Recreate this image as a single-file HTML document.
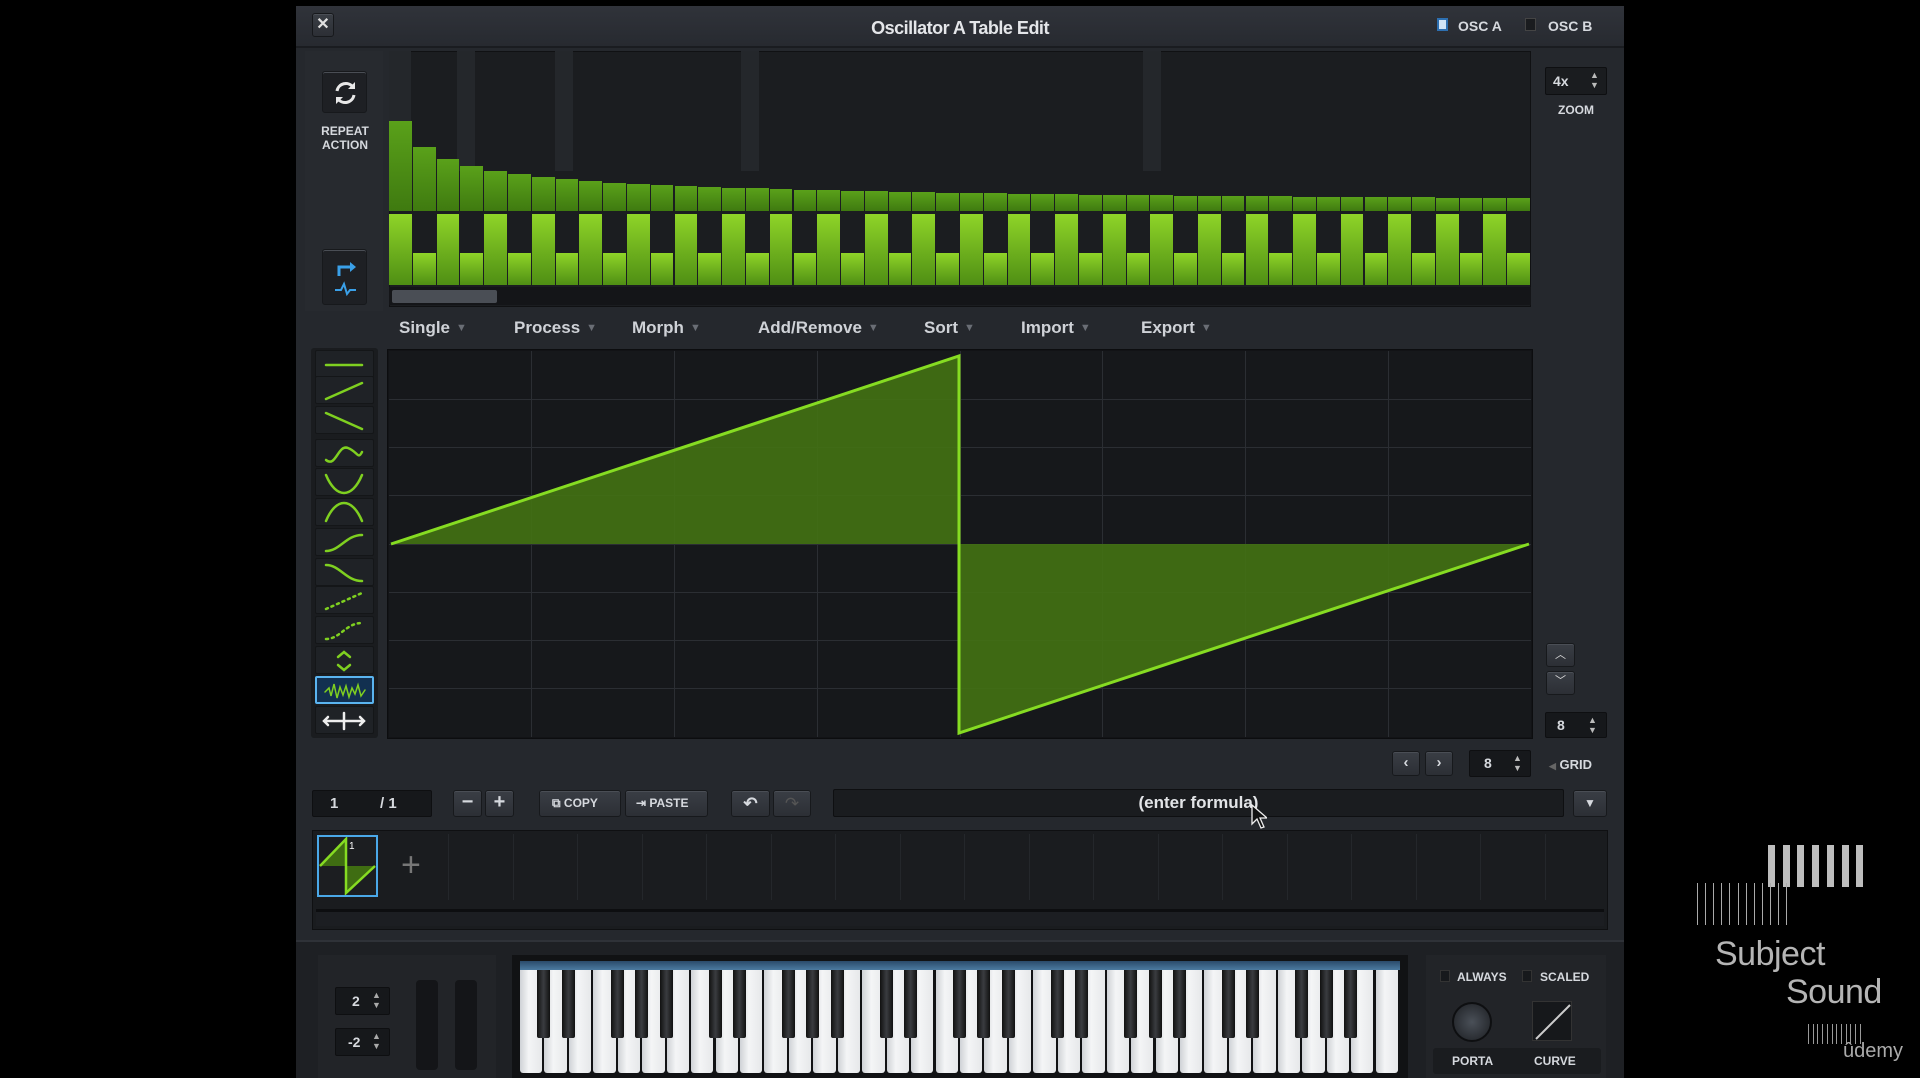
<!DOCTYPE html>
<html><head><meta charset="utf-8">
<style>
*{margin:0;padding:0;box-sizing:border-box}
body{width:1920px;height:1078px;background:#000;position:relative;overflow:hidden;font-family:"Liberation Sans",sans-serif;color:#d6d9de}
.a{position:absolute}
.btn{position:absolute;background:linear-gradient(#3a3e45,#2c2f35);border:1px solid #17191c;border-radius:3px;box-shadow:inset 0 1px 0 #4a4e55}
.fld{position:absolute;background:#16181b;border:1px solid #0e0f11;border-radius:2px}
.lbl{position:absolute;font-weight:bold;font-size:12px;color:#d6d9de;text-align:center}
.menu{position:absolute;top:318px;font-size:17px;font-weight:bold;color:#cfd2d7}
.menu i{font-style:normal;color:#6a6e75;font-size:11px;margin-left:6px;vertical-align:2px}
.tool{position:absolute;left:315px;width:59px;height:28px;background:#1f2226;border:1px solid #141618;border-radius:2px}
</style></head><body>
<div class="a" style="left:296px;top:6px;width:1328px;height:1072px;background:#25282d"></div>
<div class="a" style="left:296px;top:6px;width:1328px;height:42px;background:linear-gradient(#30333a,#272a30);border-bottom:2px solid #1a1c20"></div>
<div class="btn" style="left:312px;top:13px;width:22px;height:24px;font-weight:bold;font-size:16px;text-align:center;line-height:22px;color:#e0e0e0">✕</div>
<div class="a" style="left:760px;top:18px;width:400px;text-align:center;font-size:18px;font-weight:bold;color:#e4e6e9;letter-spacing:-0.5px">Oscillator A Table Edit</div>
<div class="a" style="left:1437px;top:18px;width:11px;height:13px;background:#cfe3f5;border:2px solid #2d6fb0"></div>
<div class="lbl" style="left:1458px;top:18px;font-size:14px">OSC A</div>
<div class="a" style="left:1525px;top:18px;width:11px;height:13px;background:#1a1c1f;border:1px solid #444"></div>
<div class="lbl" style="left:1548px;top:18px;font-size:14px">OSC B</div>

<div class="a" style="left:305px;top:51px;width:78px;height:260px;background:#272a2f"></div>
<div class="btn" style="left:322px;top:71px;width:45px;height:42px;background:#1e2024"><svg width="45" height="42"><path d="M14 19a9 9 0 0 1 16-4M31 23a9 9 0 0 1-16 4" stroke="#e8e8e8" stroke-width="3" fill="none"/><path d="M32 10v7h-7zM13 32v-7h7z" fill="#e8e8e8"/></svg></div>
<div class="lbl" style="left:310px;top:124px;width:70px;font-size:12px;line-height:14px">REPEAT<br>ACTION</div>
<div class="btn" style="left:322px;top:249px;width:45px;height:56px;background:#1e2024"><svg width="45" height="56"><path d="M16 26v-9h12" stroke="#3aa0e8" stroke-width="3" fill="none"/><path d="M27 12l6 5-6 5z" fill="#3aa0e8"/><path d="M12 40h6l3-6 3 10 3-4h6" stroke="#3aa0e8" stroke-width="2" fill="none"/></svg></div>

<div class="a" style="left:389px;top:51px;width:1142px;height:256px;background:#1b1d20;border:1px solid #101113"></div>
<div id="harm" class="a" style="left:389px;top:51px;width:1142px;height:236px"></div>
<div class="a" style="left:389px;top:287px;width:1142px;height:18px;background:#141518"></div>
<div class="a" style="left:392px;top:290px;width:105px;height:13px;background:#4a4e55;border-radius:2px"></div>

<div class="fld" style="left:1545px;top:67px;width:62px;height:28px;background:#1a1c1f"></div>
<div class="lbl" style="left:1553px;top:73px;font-size:14px">4x</div>
<div class="a" style="left:1590px;top:70px;font-size:9px;color:#bbb;line-height:10px">▲<br>▼</div>
<div class="lbl" style="left:1545px;top:103px;width:62px">ZOOM</div>

<div class="menu" style="left:399px">Single<i>▼</i></div>
<div class="menu" style="left:514px">Process<i>▼</i></div>
<div class="menu" style="left:632px">Morph<i>▼</i></div>
<div class="menu" style="left:758px">Add/Remove<i>▼</i></div>
<div class="menu" style="left:924px">Sort<i>▼</i></div>
<div class="menu" style="left:1021px">Import<i>▼</i></div>
<div class="menu" style="left:1141px">Export<i>▼</i></div>

<div class="a" style="left:311px;top:348px;width:67px;height:390px;background:#1a1c1f;border-radius:3px"></div>
<div id="tools"></div>

<div class="a" style="left:387px;top:349px;width:1146px;height:390px;background:#121316;border:1px solid #0c0d0f"></div>
<svg class="a" style="left:389px;top:351px" width="1142" height="386">
<rect width="1142" height="386" fill="#16181b"/>
<g stroke="#2b2e33" stroke-width="1">
<line x1="142.5" y1="0" x2="142.5" y2="386"/><line x1="285.5" y1="0" x2="285.5" y2="386"/><line x1="428.5" y1="0" x2="428.5" y2="386"/><line x1="571.5" y1="0" x2="571.5" y2="386"/><line x1="713.5" y1="0" x2="713.5" y2="386"/><line x1="856.5" y1="0" x2="856.5" y2="386"/><line x1="999.5" y1="0" x2="999.5" y2="386"/>
<line x1="0" y1="48.5" x2="1142" y2="48.5"/><line x1="0" y1="96.5" x2="1142" y2="96.5"/><line x1="0" y1="144.5" x2="1142" y2="144.5"/><line x1="0" y1="193.5" x2="1142" y2="193.5"/><line x1="0" y1="241.5" x2="1142" y2="241.5"/><line x1="0" y1="289.5" x2="1142" y2="289.5"/><line x1="0" y1="337.5" x2="1142" y2="337.5"/>
</g>
<path d="M2 193L570 5V193Z" fill="#42721300" />
<path d="M2 193L570 5V193Z" fill="#427213" opacity="0.9"/>
<path d="M570 193V382L1140 193Z" fill="#427213" opacity="0.9"/>
<path d="M2 193L570 5V382L1140 193" stroke="#86dc22" stroke-width="3" fill="none"/>
</svg>

<div class="btn" style="left:1546px;top:643px;width:29px;height:24px;color:#ddd;font-size:11px;text-align:center;line-height:22px">︿</div>
<div class="btn" style="left:1546px;top:671px;width:29px;height:24px;color:#ddd;font-size:11px;text-align:center;line-height:18px">﹀</div>
<div class="fld" style="left:1545px;top:712px;width:62px;height:26px"></div>
<div class="lbl" style="left:1557px;top:717px;font-size:14px">8</div>
<div class="a" style="left:1588px;top:715px;font-size:9px;color:#bbb;line-height:10px">▲<br>▼</div>

<div class="btn" style="left:1392px;top:751px;width:28px;height:25px;text-align:center;line-height:22px;font-weight:bold;font-size:15px">‹</div>
<div class="btn" style="left:1425px;top:751px;width:28px;height:25px;text-align:center;line-height:22px;font-weight:bold;font-size:15px">›</div>
<div class="fld" style="left:1469px;top:750px;width:62px;height:27px"></div>
<div class="lbl" style="left:1484px;top:755px;font-size:14px">8</div>
<div class="a" style="left:1513px;top:753px;font-size:9px;color:#bbb;line-height:10px">▲<br>▼</div>
<div class="lbl" style="left:1549px;top:757px;font-size:13px"><span style="color:#666;font-size:9px">◀</span> GRID</div>

<div class="fld" style="left:312px;top:790px;width:120px;height:27px"></div>
<div class="a" style="left:330px;top:795px;font-size:15px;font-weight:bold">1</div>
<div class="a" style="left:380px;top:795px;font-size:15px;font-weight:bold">/ 1</div>
<div class="btn" style="left:453px;top:790px;width:29px;height:27px;text-align:center;font-weight:bold;font-size:20px;line-height:22px">−</div>
<div class="btn" style="left:485px;top:790px;width:29px;height:27px;text-align:center;font-weight:bold;font-size:20px;line-height:23px">+</div>
<div class="btn" style="left:539px;top:790px;width:82px;height:27px;font-weight:bold;font-size:12px;line-height:25px;padding-left:12px">⧉ COPY</div>
<div class="btn" style="left:625px;top:790px;width:83px;height:27px;font-weight:bold;font-size:12px;line-height:25px;padding-left:10px">⇥ PASTE</div>
<div class="btn" style="left:731px;top:790px;width:39px;height:27px;text-align:center;font-weight:bold;font-size:17px;line-height:25px">↶</div>
<div class="btn" style="left:773px;top:790px;width:38px;height:27px;text-align:center;font-size:17px;line-height:25px;color:#555">↷</div>
<div class="fld" style="left:833px;top:789px;width:731px;height:28px;background:#1a1c1f"></div>
<div class="a" style="left:833px;top:793px;width:731px;text-align:center;font-size:17px;font-weight:bold;color:#e2e4e7">(enter formula)</div>
<svg class="a" style="left:1251px;top:804px" width="16" height="26"><path d="M1 1v19l5-5 4 9 3-1-4-9h7z" fill="#111" stroke="#eee" stroke-width="1.3"/></svg>
<div class="btn" style="left:1573px;top:790px;width:34px;height:27px;text-align:center;font-size:12px;line-height:25px">▼</div>

<div class="a" style="left:312px;top:830px;width:1296px;height:100px;background:#1a1c1f;border:1px solid #0f1012"></div>
<div id="thumbs"></div>
<div class="a" style="left:317px;top:835px;width:61px;height:62px;border:2px solid #4aa8e8;background:#1c1e21">
<svg width="57" height="58"><path d="M1 29L27 2V29Z M27 29V56L56 29Z" fill="#3f6d12"/><path d="M1 29L27 2V56L56 29" stroke="#86dc22" stroke-width="2.5" fill="none"/><text x="30" y="12" font-size="10" fill="#fff" font-family="Liberation Sans">1</text></svg></div>
<div class="a" style="left:401px;top:846px;font-size:34px;color:#777;font-weight:100">+</div>
<div class="a" style="left:316px;top:909px;width:1288px;height:17px;background:#1c1e22;border-top:3px solid #0d0e10"></div>

<div class="a" style="left:296px;top:940px;width:1328px;height:138px;background:#1e2024;border-top:2px solid #2f3238"></div>
<div class="a" style="left:318px;top:955px;width:178px;height:123px;background:#222428"></div>
<div class="fld" style="left:335px;top:987px;width:55px;height:28px"></div>
<div class="lbl" style="left:352px;top:993px;font-size:14px">2</div>
<div class="a" style="left:372px;top:990px;font-size:9px;color:#aaa;line-height:10px">▲<br>▼</div>
<div class="fld" style="left:335px;top:1028px;width:55px;height:28px"></div>
<div class="lbl" style="left:348px;top:1034px;font-size:14px">-2</div>
<div class="a" style="left:372px;top:1031px;font-size:9px;color:#aaa;line-height:10px">▲<br>▼</div>
<div class="a" style="left:416px;top:980px;width:22px;height:90px;background:#141518;border-radius:4px"></div>
<div class="a" style="left:455px;top:980px;width:22px;height:90px;background:#141518;border-radius:4px"></div>
<div class="a" style="left:512px;top:955px;width:896px;height:123px;background:#111214"></div>
<div id="keys" class="a" style="left:520px;top:961px;width:880px;height:112px"></div>
<div class="a" style="left:1426px;top:955px;width:180px;height:123px;background:#222428"></div>
<div class="a" style="left:1440px;top:970px;width:10px;height:12px;background:#17191c;border:1px solid #333"></div>
<div class="lbl" style="left:1457px;top:970px;font-size:12px">ALWAYS</div>
<div class="a" style="left:1522px;top:970px;width:10px;height:12px;background:#17191c;border:1px solid #333"></div>
<div class="lbl" style="left:1540px;top:970px;font-size:12px">SCALED</div>
<div class="a" style="left:1452px;top:1002px;width:40px;height:40px;border-radius:50%;background:radial-gradient(#4a5058,#1c1e22);border:2px solid #0e0f11"></div>
<div class="a" style="left:1532px;top:1001px;width:40px;height:40px;background:#16181b;border:1px solid #333"><svg width="40" height="40"><path d="M3 37L37 3" stroke="#ccc" stroke-width="2"/></svg></div>
<div class="a" style="left:1433px;top:1048px;width:168px;height:26px;background:#1a1c1f;border-radius:3px"></div>
<div class="lbl" style="left:1452px;top:1054px;font-size:12px">PORTA</div>
<div class="lbl" style="left:1534px;top:1054px;font-size:12px">CURVE</div>

<div id="logo"></div>
<div class="a" style="left:1715px;top:935px;font-size:34px;color:#b5b5b5;letter-spacing:-0.5px">Subject</div>
<div class="a" style="left:1786px;top:973px;font-size:34px;color:#b5b5b5;letter-spacing:-0.5px">Sound</div>
<div class="a" style="left:1843px;top:1040px;font-size:20px;color:#aaa">ûdemy</div>

<script>
var h=document.getElementById('harm'),s='';
[[0,22],[68,18],[166,18],[352,18],[754,18]].forEach(function(p){s+='<div class="a" style="left:'+p[0]+'px;top:0;width:'+p[1]+'px;height:120px;background:#24272b"></div>';});
var bw=1142/48;
for(var n=1;n<=48;n++){var x=(n-1)*bw,hh=Math.round(90/Math.sqrt(n));
s+='<div class="a" style="left:'+x.toFixed(1)+'px;top:'+(160-hh)+'px;width:'+(bw-1).toFixed(1)+'px;height:'+hh+'px;background:linear-gradient(#5aa11a,#3f7a10)"></div>';
var t=(n%2==1)?163:202;
s+='<div class="a" style="left:'+x.toFixed(1)+'px;top:'+t+'px;width:'+(bw-1).toFixed(1)+'px;height:'+(234-t)+'px;background:linear-gradient(#8fd428,#4f8f14)"></div>';}
h.innerHTML=s;
var ys=[364,390,420,453,482,512,542,572,600,630,660,690,720],ic=[
'M8 14H44','M8 22L44 6','M8 6L44 22','M8 20C18 28 20 4 30 8S40 20 44 12','M8 6C18 30 34 30 44 6','M8 22C18 -2 34 -2 44 22','M8 22C22 22 28 6 44 6','M8 6C22 6 28 22 44 22','M8 22L44 6','M8 22C22 22 28 6 44 6','M20 10L26 5 32 10M20 18L26 23 32 18','M6 14L10 10 12 18 15 6 18 20 21 9 24 17 27 8 30 19 33 10 36 16 39 7 42 18 46 12','M6 14H46M10 10L6 14 10 18M42 10L46 14 42 18M26 6V22'];
var t='';ys.forEach(function(y,i){var sel=i==11,col=i==12?'#eee':'#7fd020',da=(i==8||i==9)?'stroke-dasharray="2 4"':'';
t+='<div class="tool" style="top:'+(y-14)+'px;'+(sel?'background:#123050;border:2px solid #5ab4f0;':'')+'"><svg width="57" height="28" style="position:absolute;left:2px;top:0"><path d="'+ic[i]+'" stroke="'+col+'" stroke-width="'+(i==11?1.5:2.5)+'" fill="none" stroke-linecap="round" '+da+'/></svg></div>';});
document.getElementById('tools').innerHTML=t;
var th='';for(var i=0;i<18;i++){th+='<div class="a" style="left:'+(448+i*64.5)+'px;top:834px;width:1px;height:66px;background:#24272b"></div>';}
document.getElementById('thumbs').innerHTML=th;
var k='<div class="a" style="left:0;top:0;width:880px;height:9px;background:linear-gradient(#2a4a6a,#4c7aa0)"></div>',ww=880/36;
for(var i=0;i<36;i++)k+='<div class="a" style="left:'+(i*ww).toFixed(1)+'px;top:9px;width:'+(ww-2).toFixed(1)+'px;height:103px;background:linear-gradient(90deg,#cfd2d6,#f4f5f6 40%,#e6e8ea);border-radius:0 0 3px 3px"></div>';
var pat=[1,1,0,1,1,1,0];
for(var i=0;i<35;i++){if(pat[i%7])k+='<div class="a" style="left:'+((i+1)*ww-7).toFixed(1)+'px;top:9px;width:13px;height:68px;background:linear-gradient(90deg,#111,#3a3c40 50%,#111);border-radius:0 0 2px 2px"></div>';}
document.getElementById('keys').innerHTML=k;
var l='';for(var i=0;i<7;i++)l+='<div class="a" style="left:'+(1768+i*14.7)+'px;top:845px;width:7px;height:42px;background:#bdbdbd"></div>';
for(var i=0;i<12;i++)l+='<div class="a" style="left:'+(1697+i*8.1)+'px;top:883px;width:1px;height:42px;background:#aaa"></div>';
for(var i=0;i<12;i++)l+='<div class="a" style="left:'+(1808+i*4.7)+'px;top:1024px;width:1px;height:20px;background:#999"></div>';
document.getElementById('logo').innerHTML=l;
</script>
</body></html>
